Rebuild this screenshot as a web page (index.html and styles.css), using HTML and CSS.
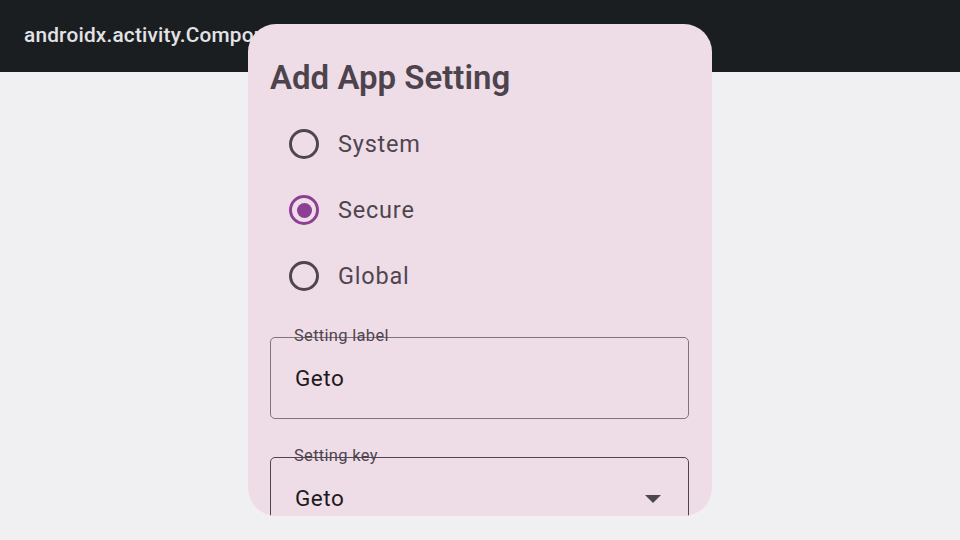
FILE: index.html
```html
<!DOCTYPE html>
<html>
<head>
<meta charset="utf-8">
<link rel="stylesheet" href="styles.css">
</head>
<body>
<div class="app">
  <header class="topbar"><span class="topbar-title">androidx.activity.ComponentActivity</span></header>
  <main class="content"></main>
</div>
<div class="dialog">
  <h1 class="dialog-title">Add App Setting</h1>
  <div class="radios">
    <div class="radio-row">
      <span class="radio"></span><span class="radio-label">System</span>
    </div>
    <div class="radio-row">
      <span class="radio radio-on"><span class="radio-dot"></span></span><span class="radio-label">Secure</span>
    </div>
    <div class="radio-row">
      <span class="radio"></span><span class="radio-label">Global</span>
    </div>
  </div>
  <div class="field">
    <span class="field-label">Setting label</span>
    <span class="field-value">Geto</span>
  </div>
  <div class="field field-focus">
    <span class="field-label">Setting key</span>
    <span class="field-value">Geto</span>
    <svg class="dropdown" width="16" height="8" viewBox="0 0 16 8"><path d="M0 0 L16 0 L8 8 Z" fill="#4f4550"/></svg>
  </div>
</div>
</body>
</html>
```
FILE: styles.css
```css
html, body {
  margin: 0;
  padding: 0;
  width: 960px;
  height: 540px;
  overflow: hidden;
  font-family: Roboto, "Noto Sans", sans-serif;
}
.app {
  display: flex;
  flex-direction: column;
  height: 540px;
  background: #f0eff1;
}
.topbar {
  height: 72px;
  background: #1b1e21;
  display: flex;
  align-items: center;
  padding-left: 24px;
  box-sizing: border-box;
}
.topbar-title {
  color: #e3e3e6;
  font-size: 20.8px;
  font-weight: 500;
  letter-spacing: 0.2px;
  white-space: nowrap;
  margin-top: -2px;
}
.content { flex: 1; }
.dialog {
  position: absolute;
  left: 248px;
  top: 24px;
  width: 464px;
  height: 492px;
  background: #eedde7;
  border-radius: 28px;
  overflow: hidden;
  box-sizing: border-box;
  padding: 0 23px 0 22px;
}
.dialog-title {
  margin: 0;
  padding-top: 34px;
  font-size: 33px;
  line-height: 40px;
  font-weight: 600;
  color: #4d434d;
}
.radios {
  display: flex;
  flex-direction: column;
  margin-top: 13px;
}
.radio-row {
  height: 66px;
  display: flex;
  align-items: center;
  padding-left: 19px;
}
.radio {
  width: 30px;
  height: 30px;
  box-sizing: border-box;
  border: 3px solid #4f4550;
  border-radius: 50%;
  display: flex;
  align-items: center;
  justify-content: center;
}
.radio-on { border-color: #8d3f96; }
.radio-dot {
  width: 15px;
  height: 15px;
  border-radius: 50%;
  background: #8d3f96;
}
.radio-label {
  margin-left: 19px;
  font-size: 23.5px;
  letter-spacing: 0.8px;
  color: #4f4550;
}
.field {
  position: relative;
  height: 82px;
  box-sizing: border-box;
  border: 1.4px solid #7e747e;
  border-radius: 5px;
  display: flex;
  align-items: center;
  padding-left: 24px;
  margin-top: 28px;
}
.field + .field { margin-top: 38px; }
.field-focus { border-color: #4f4550; border-width: 1.6px; }
.field-label {
  position: absolute;
  left: 23px;
  top: -12px;
  font-size: 16.5px;
  letter-spacing: 0.3px;
  color: #4f4550;
  line-height: 20px;
}
.field-value {
  font-size: 22.5px;
  letter-spacing: 0.5px;
  color: #1e1a20;
  margin-top: 0;
}
.dropdown {
  position: absolute;
  right: 27px;
  top: 37px;
}
```
